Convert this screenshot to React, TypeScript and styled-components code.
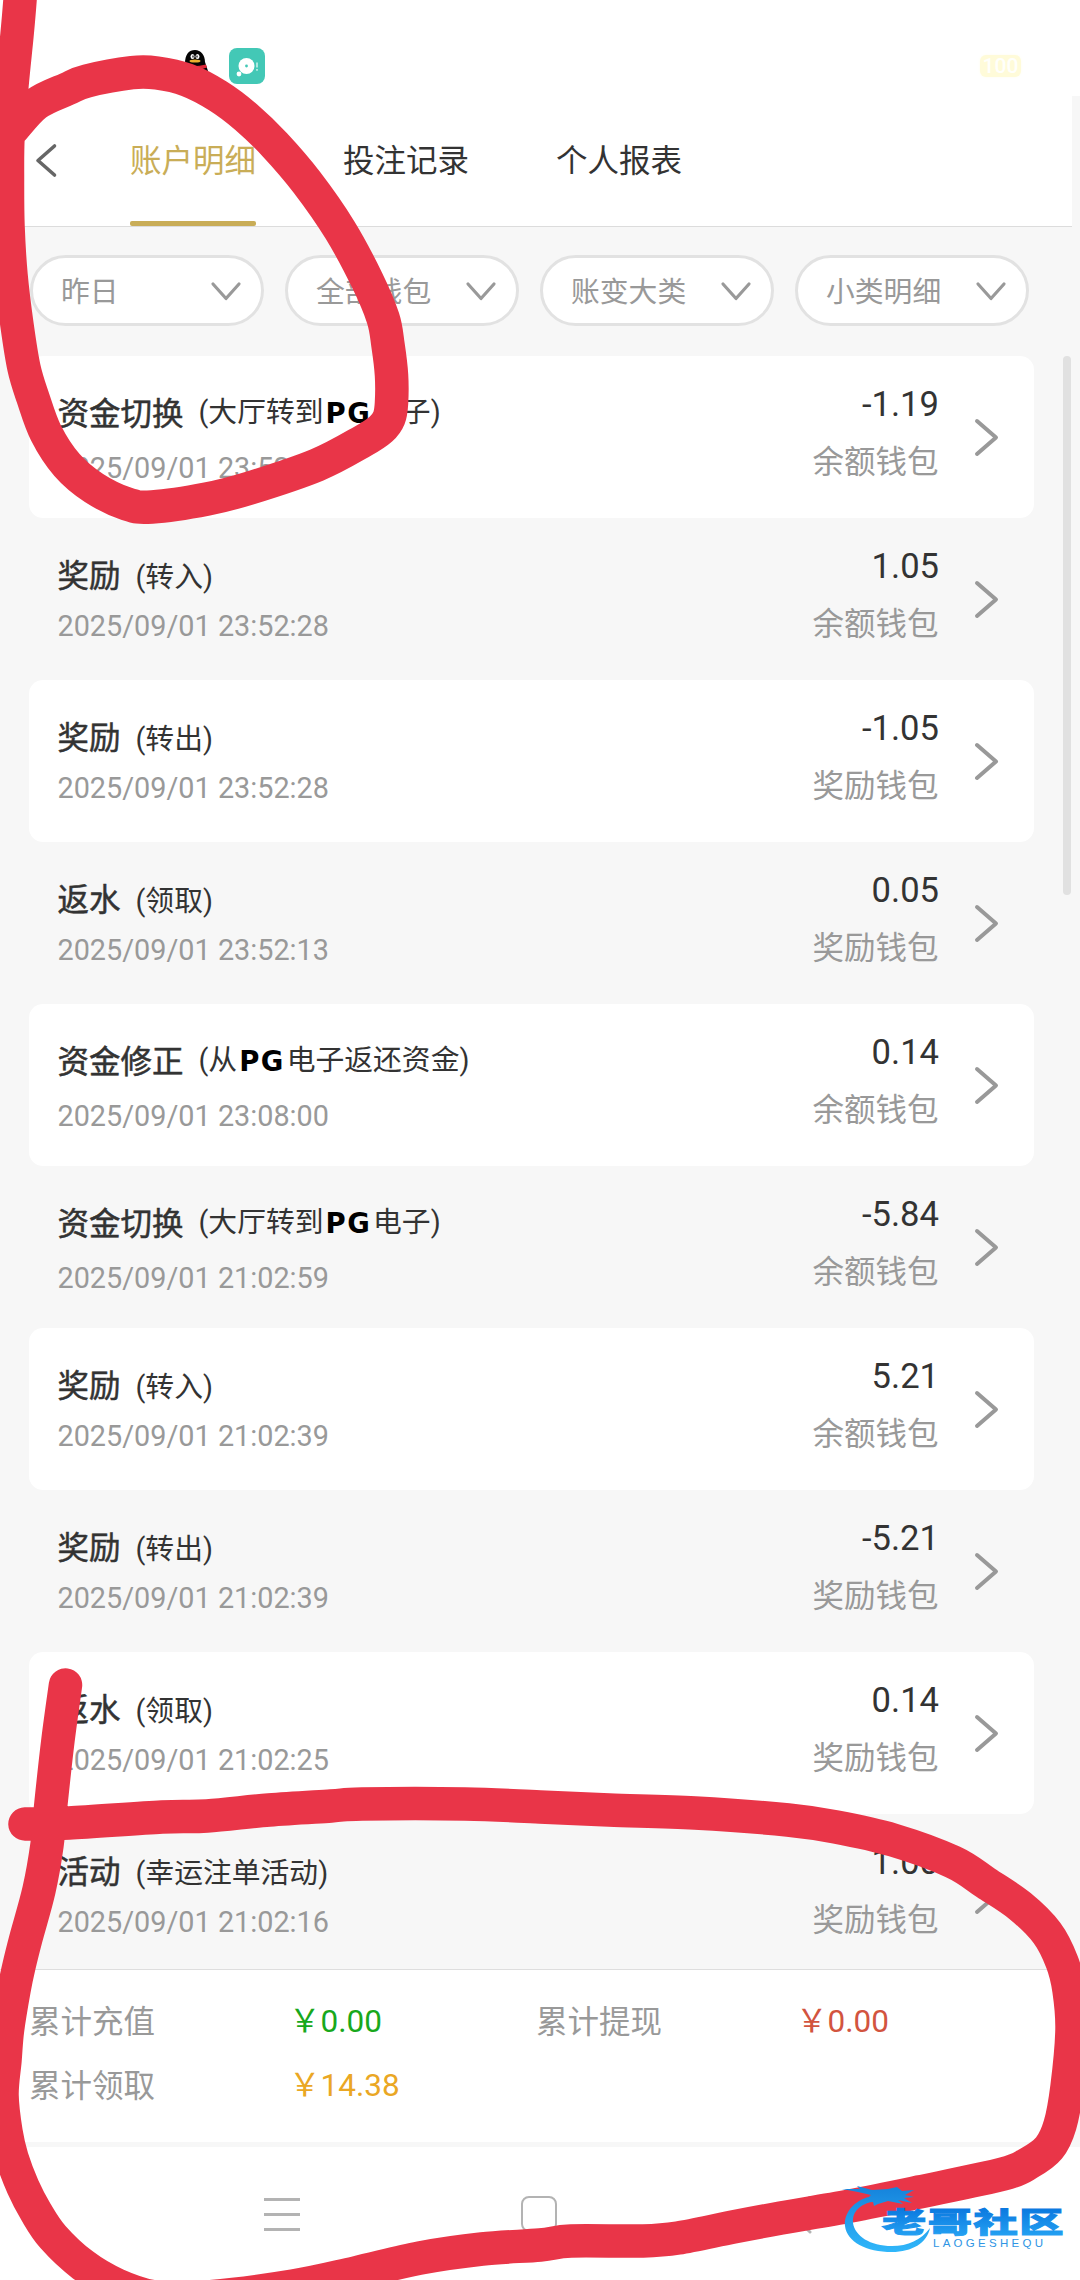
import React from "react";
import styled, { createGlobalStyle } from "styled-components";

const GlobalStyle = createGlobalStyle`
  * { box-sizing: border-box; }
  html, body { margin: 0; padding: 0; background: #f7f7f7; }
  body { font-family: Roboto, "Noto Sans CJK SC", sans-serif; color: #333; }
`;

const Screen = styled.div`
  position: relative;
  width: 1080px;
  height: 2280px;
  overflow: hidden;
  display: flex;
  flex-direction: column;
  background: #f7f7f7;
`;

const StatusBar = styled.div`
  height: 96px;
  flex: none;
  display: flex;
  align-items: flex-start;
  padding: 48px 59px 0 184px;
  background: #fff;
`;

const AppBadge = styled.div`
  width: 36px;
  height: 36px;
  margin-left: 19px;
  border-radius: 8px;
  background: #43c8b6;
`;

const Battery = styled.div`
  margin: 7px 0 0 auto;
  width: 41px;
  height: 22px;
  border-radius: 6px;
  background: #fffbd9;
  box-shadow: 0 0 3px #fffdee;
  color: #fffffb;
  font-size: 21px;
  font-weight: 500;
  line-height: 22px;
  text-align: center;
`;

const Header = styled.header`
  width: 1072px;
  height: 131px;
  flex: none;
  display: flex;
  align-items: stretch;
  padding-left: 34px;
  background: #fff;
  border-bottom: 1px solid #dcdcdc;
`;

const BackButton = styled.div`
  width: 96px;
  padding-top: 46px;
`;

const Tabs = styled.nav`
  display: flex;
  gap: 87px;
`;

const Tab = styled.div<{ $active?: boolean }>`
  width: 126px;
  padding-top: 43px;
  font-size: 31.5px;
  line-height: 46px;
  white-space: nowrap;
  color: ${(p) => (p.$active ? "#c9ad57" : "#333")};
  display: flex;
  flex-direction: column;
  justify-content: space-between;
  &::after {
    content: "";
    height: 5px;
    border-radius: 2px;
    background: ${(p) => (p.$active ? "#c9ad57" : "transparent")};
  }
`;

const Filters = styled.div`
  flex: none;
  height: 128.5px;
  display: flex;
  gap: 21px;
  padding: 28px 0 0 29.5px;
`;

const Pill = styled.div`
  width: 234px;
  height: 71px;
  display: flex;
  align-items: center;
  justify-content: space-between;
  padding: 0 18.5px 0 28.5px;
  border: 3px solid #e2e2e2;
  border-radius: 36px;
  background: #fff;
  color: #999;
  font-size: 28.8px;
  line-height: 42px;
`;

const PillText = styled.span`
  padding-top: 3px;
`;

const ListArea = styled.div`
  flex: none;
  height: 1613.5px;
  display: flex;
  overflow: hidden;
  padding-left: 29px;
`;

const List = styled.div`
  width: 1005px;
  flex: none;
`;

const ScrollThumb = styled.div`
  width: 8px;
  height: 539px;
  margin-left: 29px;
  border-radius: 4px;
  background: #e1e1e1;
`;

const Row = styled.div<{ $white: boolean }>`
  height: 162px;
  display: flex;
  padding: 0 35px 0 28.5px;
  border-radius: 14px;
  background: ${(p) => (p.$white ? "#fff" : "transparent")};
`;

const RowMain = styled.div`
  flex: 1;
  padding-top: 36.5px;
`;

const TitleLine = styled.div`
  display: flex;
  height: 46px;
  white-space: nowrap;
`;

const Title = styled.span`
  font-size: 31.5px;
  line-height: 46px;
  margin-right: 15px;
  -webkit-text-stroke: 0.5px #333;
`;

const Note = styled.span<{ $logo: boolean }>`
  display: flex;
  font-size: 28.8px;
  line-height: 44px;
  margin-top: ${(p) => (p.$logo ? -2 : 1)}px;
`;

const Logo = styled.b`
  width: 49.5px;
  padding: 1px 0 0 2px;
  font-family: "DejaVu Sans", sans-serif;
  font-size: 27.5px;
  letter-spacing: 1.5px;
  color: #000;
`;

const Time = styled.div<{ $logo: boolean }>`
  font-size: 28.8px;
  line-height: 40px;
  margin-top: ${(p) => (p.$logo ? 9.5 : 5.5)}px;
  color: #999;
`;

const RowSide = styled.div`
  display: flex;
  flex-direction: column;
  align-items: flex-end;
  margin-right: 35.5px;
  padding-top: 28px;
`;

const Amount = styled.div`
  font-size: 34.6px;
  line-height: 40px;
  margin-right: -0.5px;
`;

const Wallet = styled.div`
  font-size: 31.5px;
  line-height: 46px;
  margin-top: 16px;
  color: #999;
`;

const RowArrow = styled.div`
  width: 25px;
  padding-top: 61px;
`;

const Summary = styled.section`
  flex: none;
  height: 173px;
  width: 1072px;
  display: grid;
  grid-template-columns: 260px 247px 260px 247px;
  grid-auto-rows: 64px;
  padding: 21px 0 0 29px;
  background: #fff;
  border-top: 1px solid #dedede;
  font-size: 31.5px;
  line-height: 64px;
`;

const SumLabel = styled.span`
  color: #999;
`;

const SumValue = styled.span<{ $color: string }>`
  margin-top: -1px;
  color: ${(p) => p.$color};
`;

const NavBar = styled.div`
  flex: none;
  height: 138px;
  display: flex;
  gap: 221px;
  padding: 49px 0 0 264px;
  border-top: 5px solid #f7f7f7;
  background: #fff;
`;

const MenuIcon = styled.div`
  width: 36px;
  height: 33px;
  margin-top: 2px;
  display: flex;
  flex-direction: column;
  justify-content: space-between;
`;

const MenuLine = styled.i`
  height: 3px;
  background: #b3b3b3;
`;

const HomeIcon = styled.div`
  width: 36px;
  height: 36px;
  border: 2.5px solid #b3b3b3;
  border-radius: 8px;
`;

const Overlay = styled.svg`
  position: absolute;
  left: 0;
  top: 0;
  pointer-events: none;
`;

type ChevronProps = { w: number; h: number; points: string; color: string; sw: number };
const Chevron = ({ w, h, points, color, sw }: ChevronProps) => (
  <svg width={w} height={h} display="block" fill="none" stroke={color} strokeWidth={sw} strokeLinecap="round" strokeLinejoin="round">
    <polyline points={points} />
  </svg>
);

type Entry = { title: string; note: string; tail?: string; time: string; amount: string; wallet: string };
const entries: Entry[] = [
  { title: "资金切换", note: "(大厅转到", tail: "电子)", time: "2025/09/01 23:52:28", amount: "-1.19", wallet: "余额钱包" },
  { title: "奖励", note: "(转入)", time: "2025/09/01 23:52:28", amount: "1.05", wallet: "余额钱包" },
  { title: "奖励", note: "(转出)", time: "2025/09/01 23:52:28", amount: "-1.05", wallet: "奖励钱包" },
  { title: "返水", note: "(领取)", time: "2025/09/01 23:52:13", amount: "0.05", wallet: "奖励钱包" },
  { title: "资金修正", note: "(从", tail: "电子返还资金)", time: "2025/09/01 23:08:00", amount: "0.14", wallet: "余额钱包" },
  { title: "资金切换", note: "(大厅转到", tail: "电子)", time: "2025/09/01 21:02:59", amount: "-5.84", wallet: "余额钱包" },
  { title: "奖励", note: "(转入)", time: "2025/09/01 21:02:39", amount: "5.21", wallet: "余额钱包" },
  { title: "奖励", note: "(转出)", time: "2025/09/01 21:02:39", amount: "-5.21", wallet: "奖励钱包" },
  { title: "返水", note: "(领取)", time: "2025/09/01 21:02:25", amount: "0.14", wallet: "奖励钱包" },
  { title: "活动", note: "(幸运注单活动)", time: "2025/09/01 21:02:16", amount: "1.00", wallet: "奖励钱包" },
];

type Pt = [number, number];

// Catmull-Rom interpolation of hand-drawn marker points
const smooth = (p: Pt[]) => {
  let d = `M${p[0][0]} ${p[0][1]}`;
  for (let i = 0; i < p.length - 1; i++) {
    const a = p[i - 1] || p[i];
    const b = p[i];
    const c = p[i + 1];
    const e = p[i + 2] || c;
    d += `C${b[0] + (c[0] - a[0]) / 6} ${b[1] + (c[1] - a[1]) / 6} ${c[0] - (e[0] - b[0]) / 6} ${c[1] - (e[1] - b[1]) / 6} ${c[0]} ${c[1]}`;
  }
  return d;
};

const topMark: Pt[] = [
  [21, -20], [20, 0], [17, 35], [12, 85], [8, 137], [7.5, 180], [8, 226], [11, 275], [17, 325], [24, 368], [33, 398],
  [46, 433], [67, 465], [94, 488], [127, 504], [152, 507], [207, 499], [250, 488], [317, 465], [363, 441], [381, 429],
  [389, 418], [391.5, 403], [391.5, 375], [388, 345], [383, 318], [367, 280], [340, 230], [307, 182.5], [275, 145],
  [246, 117], [218, 96], [187, 80], [157, 73], [132, 72.7], [87, 81], [67, 89], [36, 104], [12, 130],
];

const bottomMark: Pt[] = [
  [65.5, 1685], [58, 1740], [51, 1803], [47, 1845], [39, 1890], [26, 1938], [19, 1966], [14, 1990], [7.5, 2030], [5, 2060],
  [2, 2095], [6, 2132], [12, 2158], [23, 2187], [36, 2212], [53, 2237], [83, 2265], [117, 2285], [155, 2297], [207, 2297],
  [293, 2286], [355, 2273], [420, 2258], [482, 2249], [540, 2245], [571, 2241], [643, 2241], [678, 2238], [733, 2227],
  [781, 2218], [850, 2206], [919, 2192], [1003, 2174], [1029, 2163], [1049, 2148], [1060, 2125], [1067, 2087],
  [1072, 2030], [1069, 1990], [1062, 1962], [1047, 1933], [1020, 1906], [986, 1883], [953, 1862], [893, 1840],
  [836, 1827], [788, 1820], [695, 1813], [609, 1810], [540, 1807], [465, 1804], [362, 1804], [331, 1806], [269, 1810],
  [207, 1816], [162, 1817], [69, 1823], [25, 1824],
];

const Penguin = () => (
  <svg width="26" height="30" viewBox="0 0 26 30">
    <path d="M1 16C1 6 5 2 11 2s10 5 10 12l3 9v5H3z" fill="#050505" />
    <path d="M5 19q7 6 15 4v6H5z" fill="#fff" />
    <path d="M1 17.5q10 2 21-1l1 3q-10 4-21 1z" fill="#df2838" />
    <ellipse cx="8.5" cy="8.5" rx="2" ry="2.6" fill="#fff" />
    <ellipse cx="13.5" cy="8.5" rx="2" ry="2.6" fill="#fff" />
    <path d="M9 7.5v2M13 7.5v2" stroke="#111" strokeWidth="1.3" />
    <ellipse cx="11" cy="13" rx="5.5" ry="1.5" fill="#eab02e" />
  </svg>
);

const Watermark = () => (
  <g>
    <defs>
      <linearGradient id="ink" gradientUnits="userSpaceOnUse" x1="0" y1="2188" x2="0" y2="2252">
        <stop offset="0" stopColor="#1684dc" />
        <stop offset="1" stopColor="#30b7fa" />
      </linearGradient>
      <linearGradient id="word" x1="0" y1="0" x2="0" y2="1">
        <stop offset="0.2" stopColor="#0b78df" />
        <stop offset="1" stopColor="#28a9f6" />
      </linearGradient>
    </defs>
    <path
      fill="url(#ink)"
      d="M868 2197C850 2203 844 2216 845 2226C847 2242 866 2252 892 2252C912 2252 927 2243 930 2228C921 2240 908 2246 892 2246C870 2246 855 2236 853 2223C852 2213 858 2206 870 2202Z"
    />
    <path
      fill="url(#ink)"
      d="M842 2189L860 2189L857 2186L872 2190L888 2189L897 2187L902 2191L914 2190L905 2195L914 2197L904 2198L912 2203L898 2200L903 2204L888 2201L878 2204L874 2206L873 2202L862 2203L871 2195L858 2192Z"
    />
    <g transform="translate(882 2233) scale(1.08 .7)">
      <text
        fontFamily="'Noto Sans CJK SC', sans-serif"
        fontWeight="900"
        fontSize="41"
        fill="url(#word)"
        stroke="url(#word)"
        strokeWidth="1.4"
        textLength="168"
      >
        老哥社区
      </text>
    </g>
    <text
      x="933"
      y="2247"
      fontFamily="'Liberation Sans', sans-serif"
      fontSize="11.5"
      fill="#2f95e4"
      textLength="110"
    >
      LAOGESHEQU
    </text>
  </g>
);

export default function App() {
  return (
    <Screen>
      <GlobalStyle />
      <StatusBar>
        <Penguin />
        <AppBadge>
          <svg width="36" height="36" fill="#fff">
            <circle cx="17.5" cy="18" r="8" />
            <circle cx="10" cy="26" r="2.4" />
            <circle cx="17.5" cy="18" r="1.4" fill="#43c8b6" />
            <path d="M28 14.5v5M28 21v1.8" stroke="#c8f0ea" strokeWidth="1.6" />
          </svg>
        </AppBadge>
        <Battery>100</Battery>
      </StatusBar>

      <Header>
        <BackButton>
          <Chevron w={26} h={38} points="20.5,4 4,18.5 20.5,33" color="#666" sw={3.6} />
        </BackButton>
        <Tabs>
          <Tab $active>账户明细</Tab>
          <Tab>投注记录</Tab>
          <Tab>个人报表</Tab>
        </Tabs>
      </Header>

      <Filters>
        {["昨日", "全部钱包", "账变大类", "小类明细"].map((f) => (
          <Pill key={f}>
            <PillText>{f}</PillText>
            <Chevron w={32} h={22} points="3,4 16,18.5 29,4" color="#999" sw={3.2} />
          </Pill>
        ))}
      </Filters>

      <ListArea>
        <List>
          {entries.map((e, i) => (
            <Row key={i} $white={i % 2 === 0}>
              <RowMain>
                <TitleLine>
                  <Title>{e.title}</Title>
                  <Note $logo={!!e.tail}>
                    {e.note}
                    {e.tail && <Logo>PG</Logo>}
                    {e.tail}
                  </Note>
                </TitleLine>
                <Time $logo={!!e.tail}>{e.time}</Time>
              </RowMain>
              <RowSide>
                <Amount>{e.amount}</Amount>
                <Wallet>{e.wallet}</Wallet>
              </RowSide>
              <RowArrow>
                <Chevron w={26} h={40} points="3,4 22,20.5 3,37" color="#999" sw={4} />
              </RowArrow>
            </Row>
          ))}
        </List>
        <ScrollThumb />
      </ListArea>

      <Summary>
        <SumLabel>累计充值</SumLabel>
        <SumValue $color="#18a81c">￥0.00</SumValue>
        <SumLabel>累计提现</SumLabel>
        <SumValue $color="#d2543f">￥0.00</SumValue>
        <SumLabel>累计领取</SumLabel>
        <SumValue $color="#eaa724">￥14.38</SumValue>
      </Summary>

      <NavBar>
        <MenuIcon>
          <MenuLine />
          <MenuLine />
          <MenuLine />
        </MenuIcon>
        <HomeIcon />
        <Chevron w={36} h={42} points="32,1 14,19 32,36" color="#b3b3b3" sw={3} />
      </NavBar>

      <Overlay width="1080" height="2280" viewBox="0 0 1080 2280">
        <g fill="none" stroke="#e93548" strokeWidth="33.5" strokeLinecap="round" strokeLinejoin="round">
          <path d={smooth(topMark)} />
          <path d={smooth(bottomMark)} />
        </g>
        <Watermark />
      </Overlay>
    </Screen>
  );
}
